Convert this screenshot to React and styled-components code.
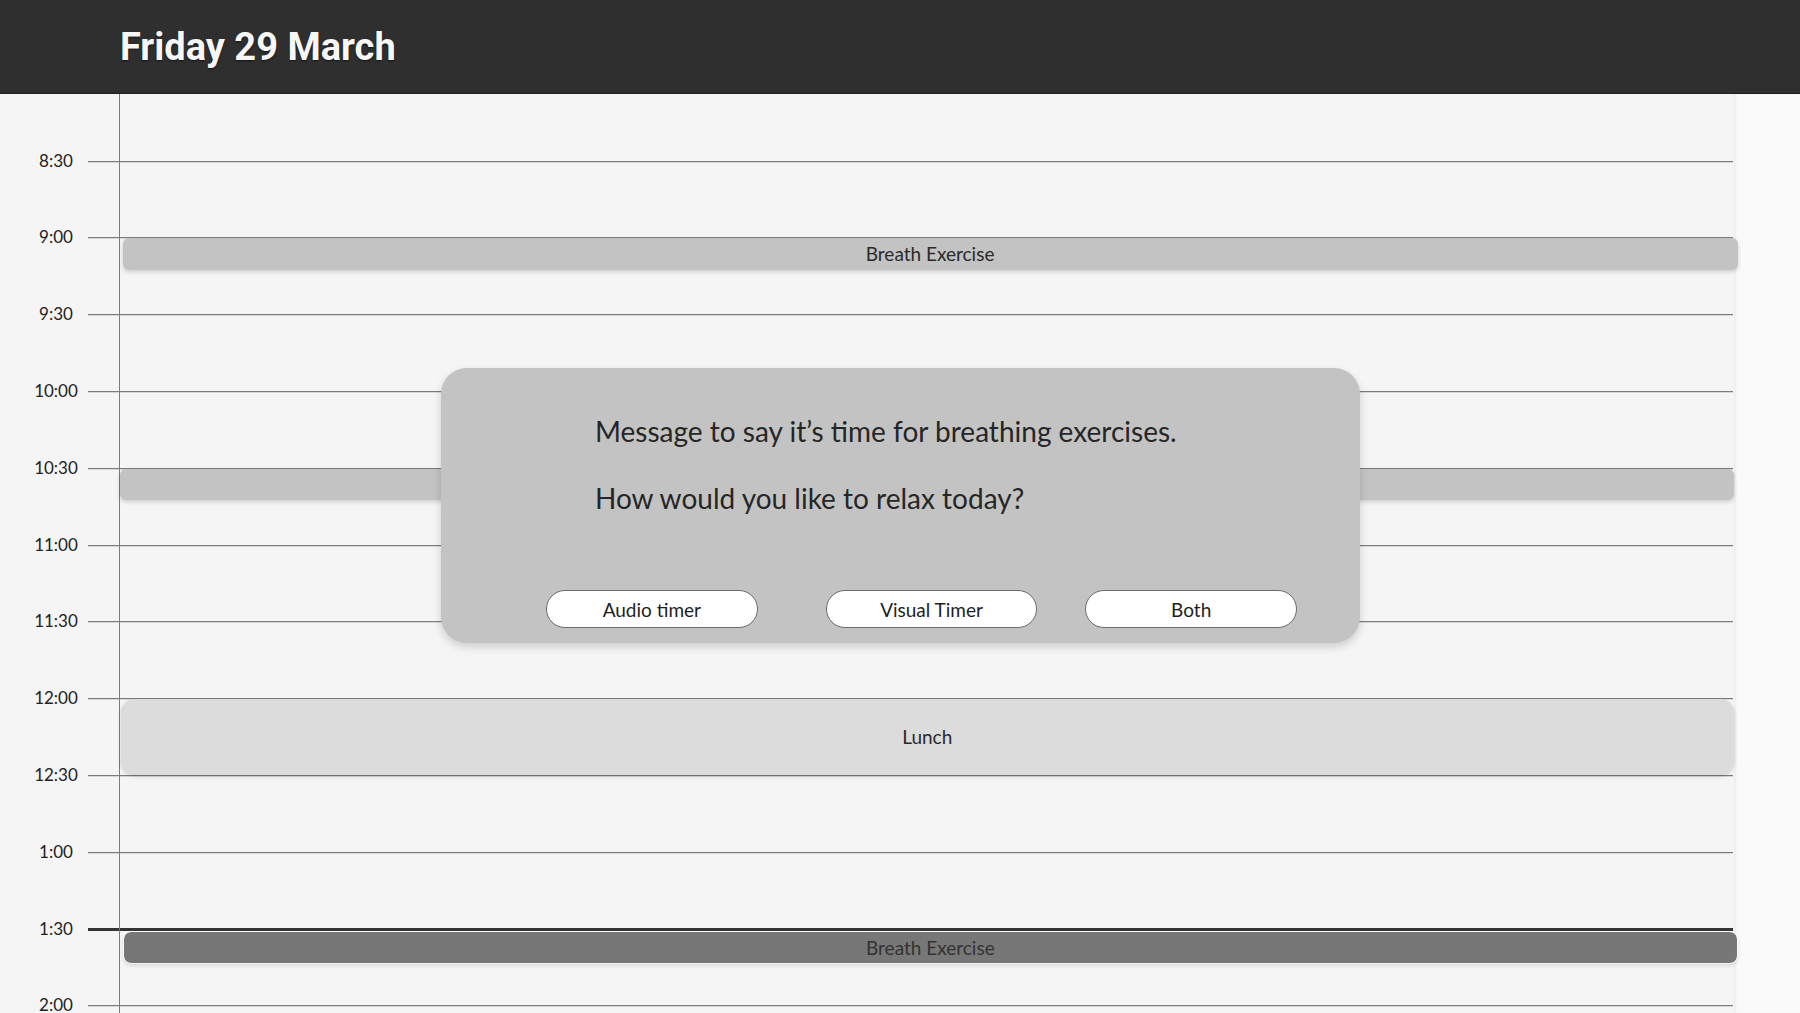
import React from "react";
import styled, { createGlobalStyle, css } from "styled-components";

const SLOT = 76.8;
const FIRST_LINE = 66.7;
const START_MIN = 8 * 60 + 30;

const GlobalStyle = createGlobalStyle`
  html, body {
    margin: 0;
    padding: 0;
    background: #f5f5f5;
  }
  body {
    font-family: Lato, "Noto Sans", sans-serif;
    color: #222;
  }
  * {
    box-sizing: border-box;
  }
`;

const Page = styled.div`
  width: 1800px;
  height: 1013px;
  display: flex;
  flex-direction: column;
  overflow: hidden;
`;

const Header = styled.header`
  height: 94px;
  flex: none;
  display: flex;
  align-items: center;
  padding-left: 120px;
  background: #2f2f2f;
  border-bottom: 1px solid #1f1f1f;
`;

const Title = styled.h1`
  margin: 0;
  font-family: Roboto, "Liberation Sans", sans-serif;
  font-weight: 700;
  font-size: 38px;
  line-height: 1;
  color: #f7f7f7;
  text-shadow: 0 1px 2px rgba(0, 0, 0, 0.6);
`;

const Body = styled.main`
  flex: 1;
  display: flex;
  min-height: 0;
`;

const Calendar = styled.section`
  position: relative;
  width: 1734px;
  flex: none;
  background: #f5f5f5;
`;

const Slots = styled.div`
  padding-top: ${FIRST_LINE}px;
  display: flex;
  flex-direction: column;
`;

const Slot = styled.div`
  height: ${SLOT}px;
  display: flex;
  align-items: flex-start;
`;

const TimeLabel = styled.span`
  width: 64px;
  margin-left: 24px;
  margin-top: -10px;
  line-height: 20px;
  font-size: 17px;
  text-align: center;
  color: #222;
`;

const Rule = styled.div`
  flex: 1;
  height: 1px;
  margin-right: 1px;
  background: #7c7c7c;
  box-shadow: 0 1px 0 rgba(0, 0, 0, 0.12);

  ${(p) =>
    p.$now &&
    css`
      height: 3px;
      margin-top: -1px;
      background: #333;
      box-shadow: none;
    `}
`;

const DayColumn = styled.div`
  position: absolute;
  top: 0;
  bottom: 0;
  left: 119px;
  right: 0;
  border-left: 1px solid #7c7c7c;
`;

const tones = {
  mid: css`
    background: #c3c3c3;
    color: #2a2a2a;
    border-radius: 6px;
  `,
  light: css`
    background: #dcdcdc;
    color: #2a2a2a;
    border-radius: 14px;
  `,
  dark: css`
    background: #777;
    color: #333;
    border-radius: 7px;
    outline: 1px solid rgba(255, 255, 255, 0.8);
  `,
};

const Event = styled.div`
  position: absolute;
  display: flex;
  align-items: center;
  justify-content: center;
  font-size: 19px;
  box-shadow: 0 2px 4px rgba(0, 0, 0, 0.16);
  ${(p) => tones[p.$tone]}
`;

const Modal = styled.div`
  position: absolute;
  left: 441px;
  top: 274px;
  width: 919px;
  height: 275px;
  display: flex;
  flex-direction: column;
  padding: 47px 63px 15px 105px;
  background: #c3c3c3;
  border-radius: 26px;
  box-shadow: 0 4px 8px rgba(0, 0, 0, 0.16);
`;

const Message = styled.p`
  margin: 0 0 33.4px 49px;
  font-size: 28px;
  line-height: 33.6px;
  color: #262626;
`;

const Choices = styled.div`
  margin-top: auto;
  display: flex;
  gap: 48px;
`;

const Choice = styled.button`
  width: 212px;
  height: 38px;
  margin-right: ${(p) => (p.$wide ? "20px" : "0")};
  border: 1px solid #6c6c6c;
  border-radius: 19px;
  background: #fff;
  font-family: Lato, "Noto Sans", sans-serif;
  font-size: 19px;
  color: #1e1e1e;
  cursor: pointer;
`;

const Gutter = styled.aside`
  flex: 1;
  background: #fafafa;
  box-shadow: inset 2px 0 2px rgba(0, 0, 0, 0.05);
`;

const times = [
  "8:30", "9:00", "9:30", "10:00", "10:30", "11:00",
  "11:30", "12:00", "12:30", "1:00", "1:30", "2:00",
];

const events = [
  { id: 1, title: "Breath Exercise", start: 540, len: 12.5, tone: "mid", left: 2.5, right: -3.7, dy: 0 },
  { id: 2, title: "", start: 630, len: 12.2, tone: "mid", left: 0, right: 0, dy: 1 },
  { id: 3, title: "Lunch", start: 720, len: 29.2, tone: "light", left: 0.5, right: 0, dy: 1 },
  { id: 4, title: "Breath Exercise", start: 810, len: 12.3, tone: "dark", left: 4, right: -2.7, dy: 3 },
];

const minToY = (m) => FIRST_LINE + ((m - START_MIN) / 30) * SLOT;

export default function App() {
  return (
    <Page>
      <GlobalStyle />
      <Header>
        <Title>Friday 29 March</Title>
      </Header>
      <Body>
        <Calendar>
          <Slots>
            {times.map((t) => (
              <Slot key={t}>
                <TimeLabel>{t}</TimeLabel>
                <Rule $now={t === "1:30"} />
              </Slot>
            ))}
          </Slots>
          <DayColumn>
            {events.map((e) => (
              <Event
                key={e.id}
                $tone={e.tone}
                style={{
                  top: minToY(e.start) + e.dy,
                  height: (e.len / 30) * SLOT,
                  left: e.left,
                  right: e.right,
                }}
              >
                {e.title}
              </Event>
            ))}
          </DayColumn>
          <Modal>
            <Message>Message to say it’s time for breathing exercises.</Message>
            <Message>How would you like to relax today?</Message>
            <Choices>
              <Choice $wide>Audio timer</Choice>
              <Choice>Visual Timer</Choice>
              <Choice>Both</Choice>
            </Choices>
          </Modal>
        </Calendar>
        <Gutter />
      </Body>
    </Page>
  );
}
